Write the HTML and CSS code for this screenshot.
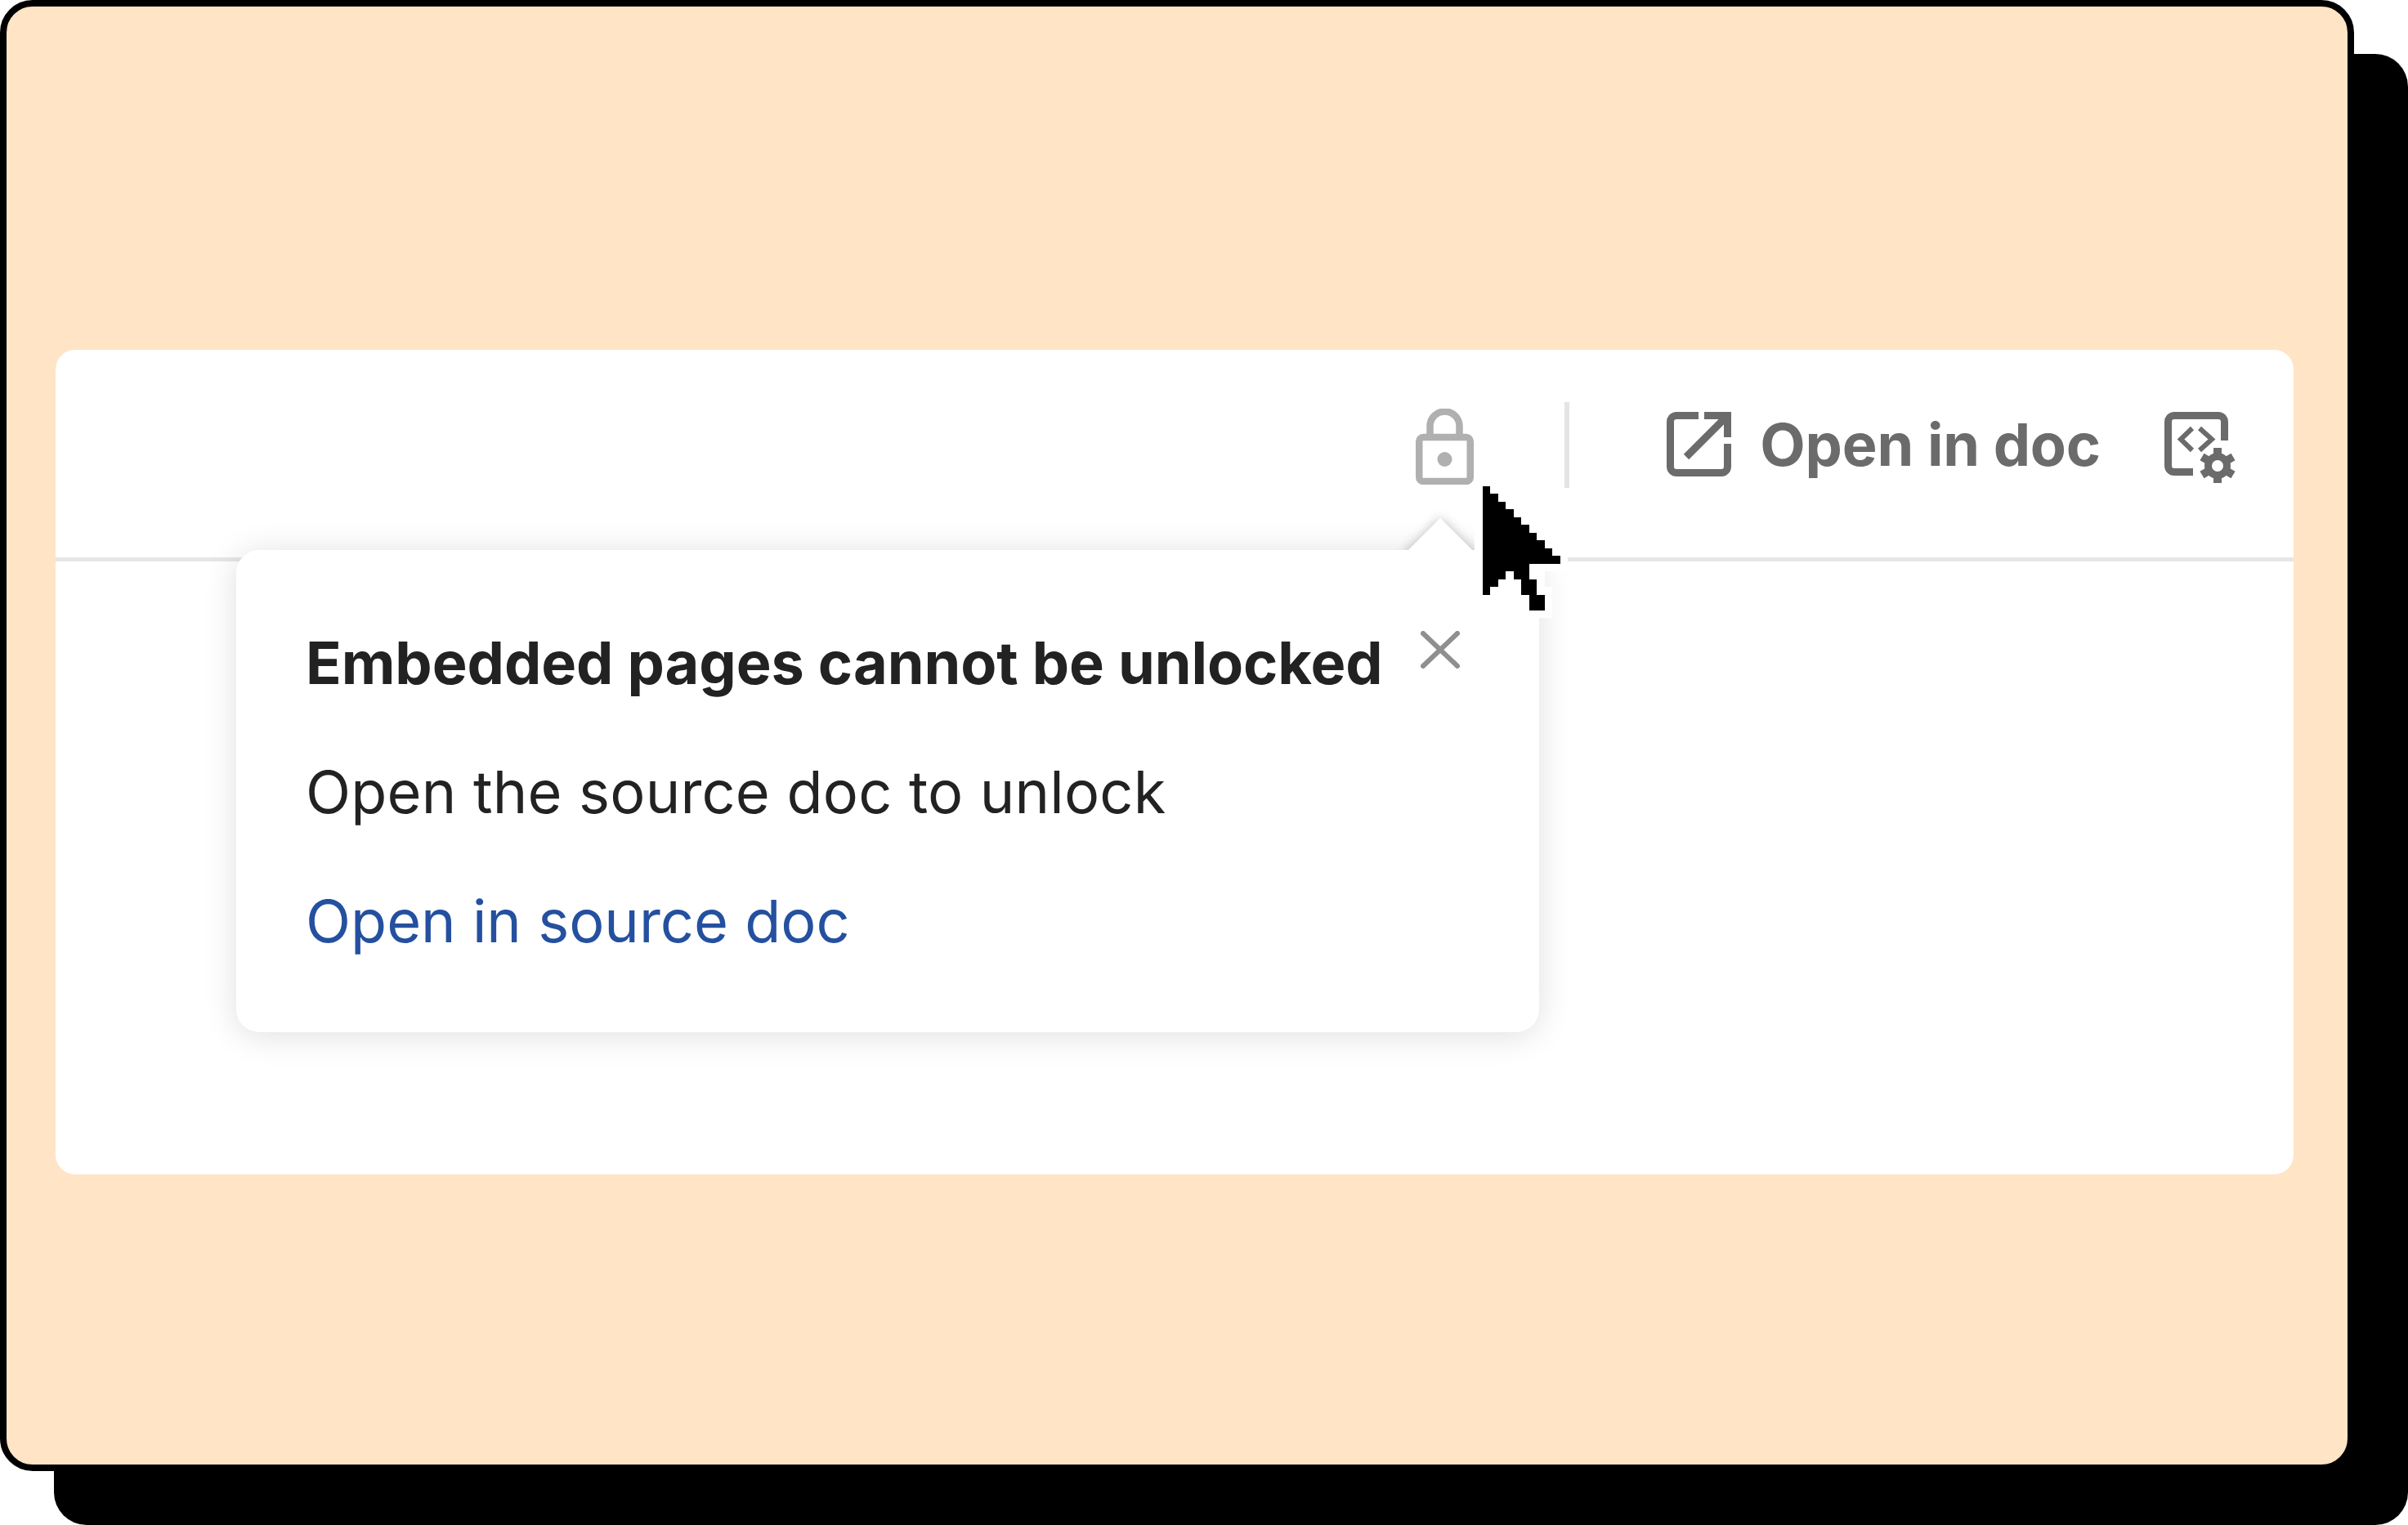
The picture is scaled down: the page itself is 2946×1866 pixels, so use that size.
FILE: index.html
```html
<!DOCTYPE html>
<html lang="en">
<head>
<meta charset="UTF-8">
<meta name="viewport" content="width=device-width, initial-scale=1.0">
<title>Embedded pages cannot be unlocked</title>
<link rel="stylesheet" href="styles.css">
</head>
<body>

<div class="frame">
  <div class="card">
    <div class="toolbar">
      <svg class="icono-candado" viewBox="0 0 71 93" fill="none" stroke="#b0b0b0" stroke-width="8.5">
        <rect x="4.25" y="35" width="62.5" height="54" rx="5"/>
        <path d="M17.5 33V21.5a18 18 0 0 1 36 0V33"/>
        <circle cx="35.5" cy="62" r="9" fill="#b0b0b0" stroke="none"/>
      </svg>
      <div class="separador"></div>
      <a class="abrir" href="#">
        <svg class="icono-abrir" viewBox="0 0 79 79" fill="none" stroke="#6b6b6b" stroke-width="9">
          <path d="M39 4.5H12a7.5 7.5 0 0 0-7.5 7.5V67a7.5 7.5 0 0 0 7.5 7.5H67a7.5 7.5 0 0 0 7.5-7.5V39"/>
          <path d="M46 4.5H74.5V31"/>
          <path d="M74.5 4.5L24 55"/>
        </svg>
        Open in doc
      </a>
      <svg class="icono-ajustes" viewBox="0 0 87 87" fill="none" stroke="#6b6b6b" stroke-width="9">
        <path d="M73.5 35V12a7.5 7.5 0 0 0-7.5-7.5H12a7.5 7.5 0 0 0-7.5 7.5V66a7.5 7.5 0 0 0 7.5 7.5H35"/>
        <path d="M34 20L20 33.5L34 47M43 20L58 33.5L43 47" stroke-width="6"/>
        <g stroke="none" fill="#6b6b6b">
          <rect x="60" y="44" width="10" height="44"/>
          <rect x="60" y="44" width="10" height="44" transform="rotate(60 65 66)"/>
          <rect x="60" y="44" width="10" height="44" transform="rotate(120 65 66)"/>
        </g>
        <circle cx="65" cy="66" r="11.5" stroke-width="9"/>
        <circle cx="65" cy="66" r="7" fill="#fff" stroke="none"/>
      </svg>
    </div>

    <div class="popover">
      <div class="flecha"><div class="flecha-cuadro"></div></div>
      <svg class="cerrar" viewBox="0 0 48 46" fill="none" stroke="#8f8f8f" stroke-width="6" stroke-linecap="round">
        <path d="M3 3L45 43M45 3L3 43"/>
      </svg>
      <div class="titulo">Embedded pages cannot be unlocked</div>
      <div class="texto">Open the source doc to unlock</div>
      <a class="enlace" href="#">Open in source doc</a>
    </div>

    <svg class="cursor" viewBox="-1 -1 12 18" shape-rendering="crispEdges">
      <path fill="#000" stroke="#fff" stroke-width="2" paint-order="stroke" stroke-linejoin="miter" d="M0 0H1V1H2V2H3V3H4V4H5V5H6V6H7V7H8V8H9V9H10V10H6V12H7V14H8V16H6V14H5V12H4V11H3V12H2V13H1V14H0Z"/>
    </svg>
  </div>
</div>

</body>
</html>
```

FILE: styles.css
```css
html,
body {
  height: 1866px;
}

body {
  margin: 0;
  padding: 0;
  background: #fff;
  font-family: Inter, "Liberation Sans", sans-serif;
}

.frame {
  box-sizing: border-box;
  width: 2880px;
  height: 1800px;
  padding: 420px 66px 0 60px;
  background-color: #ffe4c6;
  border: 8px solid #000;
  border-radius: 40px;
  box-shadow: 66px 66px 0 #000;
}

.card {
  position: relative;
  height: 1009px;
  background-color: #fff;
  border-radius: 24px;
}

.toolbar {
  box-sizing: border-box;
  height: 259px;
  padding: 0 71px 24px 0;
  border-bottom: 5px solid #e6e6e6;
  display: flex;
  justify-content: flex-end;
  align-items: center;
}

.icono-candado {
  width: 71px;
  height: 93px;
  margin: 7px 111px 0 0;
}

.separador {
  width: 6px;
  height: 105px;
  margin: 3px 119px 0 0;
  background-color: #e4e4e4;
}

.abrir {
  display: flex;
  align-items: center;
  gap: 35px;
  margin-right: 78px;
  font-size: 72px;
  font-weight: 700;
  letter-spacing: -0.2px;
  color: #6b6b6b;
  text-decoration: none;
}

.icono-abrir {
  width: 79px;
  height: 79px;
}

.icono-ajustes {
  width: 87px;
  height: 87px;
  margin-top: 9px;
}

.popover {
  position: absolute;
  left: 221px;
  top: 245px;
  box-sizing: border-box;
  width: 1594px;
  height: 590px;
  padding: 59px 85px;
  background-color: #fff;
  border-radius: 28px;
  box-shadow: 0 4px 40px rgba(0, 0, 0, 0.13);
  display: flex;
  flex-direction: column;
  font-size: 72px;
  line-height: 158px;
  color: #222;
}

.titulo {
  font-weight: 700;
  letter-spacing: -0.04px;
}

.texto {
  letter-spacing: 0.2px;
}

.enlace {
  color: #24509f;
  text-decoration: none;
}

.cerrar {
  position: absolute;
  left: 1449px;
  top: 99px;
  width: 48px;
  height: 46px;
}

.flecha {
  position: absolute;
  left: 1413px;
  top: -60px;
  width: 120px;
  height: 60px;
  overflow: hidden;
}

.flecha-cuadro {
  width: 64px;
  height: 64px;
  margin: 34px 0 0 28px;
  background-color: #fff;
  transform: rotate(45deg);
  box-shadow: 0 0 14px rgba(0, 0, 0, 0.25);
}

.cursor {
  position: absolute;
  left: 1735.5px;
  top: 156.5px;
  width: 114px;
  height: 171px;
}
```
